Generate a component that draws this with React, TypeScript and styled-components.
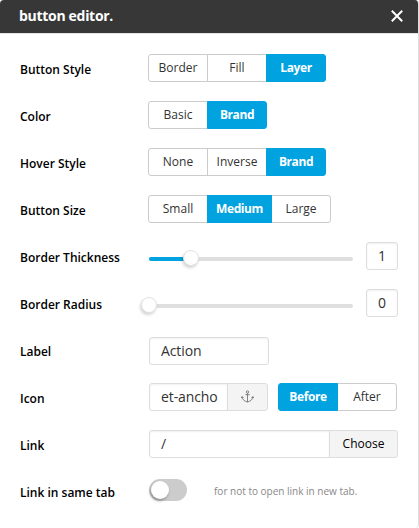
import React from 'react';
import styled, { createGlobalStyle } from 'styled-components';

const Global = createGlobalStyle`
  * { box-sizing: border-box; }
  body { margin: 0; background: #fff; font-family: 'Open Sans', sans-serif; }
  button, input { font-family: inherit; margin: 0; outline: none; }
`;

const Panel = styled.section`
  width: 419px;
  height: 528px;
  background: #fff;
  border-right: 1px solid #dcdcdc;
  border-radius: 4px;
  overflow: hidden;
`;

const Header = styled.header`
  display: flex;
  align-items: center;
  justify-content: space-between;
  width: 419px;
  height: 33px;
  padding: 0 16px 0 19px;
  background: #373737;
  color: #fff;
  box-shadow: 0 1px 0 #e4e4e4;
`;

const Title = styled.h1`
  margin: 0;
  padding-bottom: 1px;
  font-size: 14px;
  font-weight: 700;
  line-height: 32px;
  letter-spacing: -0.3px;
`;

const Close = styled.button`
  display: flex;
  padding: 0 0 1px;
  border: 0;
  background: none;
`;

const Form = styled.div`
  padding: 12px 0 0 20px;
`;

const Row = styled.div`
  display: grid;
  grid-template-columns: 128px 1fr;
  height: 47px;
`;

const Label = styled.label`
  padding-top: 1px;
  font-size: 12px;
  font-weight: 600;
  line-height: 48px;
  color: #000;
  white-space: nowrap;
`;

const Control = styled.div<{ $top?: number; $left?: number }>`
  display: flex;
  align-items: flex-start;
  padding-top: ${p => p.$top ?? 9}px;
  padding-left: ${p => p.$left ?? 0}px;
`;

const Group = styled.div<{ $gap?: number }>`
  display: flex;
  margin-left: ${p => p.$gap ?? 0}px;
`;

const Segment = styled.button<{ $active?: boolean; $width?: number }>`
  position: relative;
  z-index: ${p => (p.$active ? 1 : 0)};
  width: ${p => p.$width ?? 60}px;
  height: 28px;
  padding: 0 0 1px;
  border: 1px solid ${p => (p.$active ? '#00a2e0' : '#ccc')};
  background: ${p => (p.$active ? '#00a2e0' : '#fff')};
  color: ${p => (p.$active ? '#fff' : '#333')};
  font-size: 12px;
  font-weight: ${p => (p.$active ? 700 : 400)};
  letter-spacing: ${p => (p.$active ? '-0.4px' : '0')};
  line-height: 25px;
  &:first-child { border-radius: 3px 0 0 3px; }
  &:last-child { border-radius: 0 3px 3px 0; }
  & + & { margin-left: -1px; }
`;

const Range = styled.div`
  display: flex;
  align-items: center;
  width: 204px;
  height: 4px;
  margin-top: 15px;
  border-radius: 2px;
  background: #dfdfdf;
`;

const Fill = styled.div<{ $width: number }>`
  flex: none;
  width: ${p => p.$width}px;
  height: 4px;
  border-radius: 2px;
  background: #00a2e0;
`;

const Thumb = styled.div`
  flex: none;
  width: 16px;
  height: 16px;
  margin: -2px 0 0 -8px;
  border: 1px solid #e2e2e2;
  border-radius: 50%;
  background: #fff;
  box-shadow: -1px 2px 3px rgba(0, 0, 0, 0.17);
`;

const Field = styled.input<{ $width: number; $joined?: boolean }>`
  width: ${p => p.$width}px;
  height: 28px;
  padding: 0 0 1px 11px;
  border: 1px solid #ddd;
  border-radius: ${p => (p.$joined ? '3px 0 0 3px' : '3px')};
  background: #fff;
  box-shadow: inset 0 1px 2px rgba(0, 0, 0, 0.06);
  color: #333;
  font-size: 14px;
  letter-spacing: -0.1px;
`;

const NumberField = styled(Field)`
  margin-left: 13px;
  padding-left: 0;
  text-align: center;
`;

const Addon = styled.button<{ $width: number }>`
  display: flex;
  align-items: center;
  justify-content: center;
  width: ${p => p.$width}px;
  height: 28px;
  margin-left: -1px;
  padding: 0 0 1px;
  border: 1px solid #ddd;
  border-radius: 0 3px 3px 0;
  background: #f4f4f4;
  color: #000;
  font-size: 12px;
`;

const Toggle = styled.button`
  display: flex;
  width: 38px;
  height: 22px;
  padding: 2px;
  border: 0;
  border-radius: 11px;
  background: #ccc;
`;

const Knob = styled.span`
  width: 18px;
  height: 18px;
  border-radius: 50%;
  background: #fff;
  box-shadow: -1px 2px 3px rgba(0, 0, 0, 0.3);
`;

const Hint = styled.span`
  margin-left: 27px;
  font-size: 10px;
  line-height: 24px;
  color: #888;
`;

type Option = { text: string; active?: boolean; width?: number };

const Options = ({ items, gap }: { items: Option[]; gap?: number }) => (
  <Group $gap={gap}>
    {items.map(o => (
      <Segment key={o.text} $active={o.active} $width={o.width}>{o.text}</Segment>
    ))}
  </Group>
);

const Anchor = () => (
  <svg width="13" height="13" viewBox="0 0 13 13" fill="none" stroke="#777" strokeWidth="0.9">
    <circle cx="6.5" cy="2" r="1.2" />
    <path d="M6.5 3.2V12M4.3 4.7h4.4M.2 8.3 1.2 6.5l1.4 1.6M1.2 6.7C1.4 9.9 3.6 11.2 6.5 12c2.9-.8 5.1-2.1 5.3-5.3M10.4 8.1l1.4-1.6 1 1.8" />
  </svg>
);

export default function App() {
  return (
    <>
      <Global />
      <Panel>
        <Header>
          <Title>button editor.</Title>
          <Close aria-label="Close">
            <svg width="12" height="12" viewBox="0 0 12 12" stroke="#fff" strokeWidth="2">
              <path d="M.8.8l10.4 10.4M11.2.8.8 11.2" />
            </svg>
          </Close>
        </Header>
        <Form>
          <Row>
            <Label>Button Style</Label>
            <Control><Options items={[{ text: 'Border' }, { text: 'Fill' }, { text: 'Layer', active: true }]} /></Control>
          </Row>
          <Row>
            <Label>Color</Label>
            <Control><Options items={[{ text: 'Basic' }, { text: 'Brand', active: true }]} /></Control>
          </Row>
          <Row>
            <Label>Hover Style</Label>
            <Control><Options items={[{ text: 'None' }, { text: 'Inverse' }, { text: 'Brand', active: true }]} /></Control>
          </Row>
          <Row>
            <Label>Button Size</Label>
            <Control><Options items={[{ text: 'Small' }, { text: 'Medium', active: true, width: 65 }, { text: 'Large' }]} /></Control>
          </Row>
          <Row>
            <Label>Border Thickness</Label>
            <Control $left={1}>
              <Range><Fill $width={42} /><Thumb /></Range>
              <NumberField $width={32} defaultValue="1" />
            </Control>
          </Row>
          <Row>
            <Label>Border Radius</Label>
            <Control $left={1}>
              <Range><Thumb /></Range>
              <NumberField $width={32} defaultValue="0" />
            </Control>
          </Row>
          <Row>
            <Label>Label</Label>
            <Control $left={1} $top={10}><Field $width={120} defaultValue="Action" /></Control>
          </Row>
          <Row>
            <Label>Icon</Label>
            <Control $left={1}>
              <Field $width={79} $joined defaultValue="et-ancho" />
              <Addon $width={41} aria-label="Pick icon"><Anchor /></Addon>
              <Options gap={10} items={[{ text: 'Before', active: true }, { text: 'After' }]} />
            </Control>
          </Row>
          <Row>
            <Label>Link</Label>
            <Control $left={1}>
              <Field $width={181} $joined defaultValue="/" />
              <Addon $width={69}>Choose</Addon>
            </Control>
          </Row>
          <Row>
            <Label>Link in same tab</Label>
            <Control $left={1} $top={11}>
              <Toggle role="switch" aria-checked={false}><Knob /></Toggle>
              <Hint>for not to open link in new tab.</Hint>
            </Control>
          </Row>
        </Form>
      </Panel>
    </>
  );
}
